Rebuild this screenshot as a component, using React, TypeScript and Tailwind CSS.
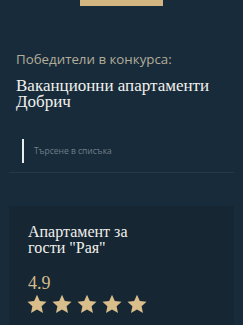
import React from "react";

function Star() {
  return (
    <svg width="20" height="20" viewBox="0 0 24 23" className="block">
      <path
        d="M12 0.5l3.4 7.3 8.1 0.9-6 5.5 1.7 8.1L12 18.2l-7.2 4.1 1.7-8.1-6-5.5 8.1-0.9z"
        fill="#d9bd8a"
      />
    </svg>
  );
}

export default function App() {
  return (
    <div className="w-[243px] h-[325px] bg-[#182b3a] overflow-hidden">
      <div className="mx-auto w-[83px] h-[6px] bg-[#d3b582]" />
      <div className="pt-[43px] px-4">
        <p className="text-[13.3px] leading-[20px] text-[#b3ad9b] font-['Open_Sans',sans-serif]">
          Победители в конкурса:
        </p>
        <h1 className="mt-[9px] text-[17px] leading-[15.5px] text-[#f1f1ee] font-['Liberation_Serif',serif]">
          Ваканционни апартаменти Добрич
        </h1>
      </div>
      <div className="mx-[9px] mt-[30px] border-b border-[#25394a] pb-[9px]">
        <div className="flex items-center h-[24px] pl-[13px]">
          <div className="w-[2px] h-[24px] bg-[#e8eef0]" />
          <span className="ml-[10px] text-[8.5px] text-[#6f7f88] font-['Open_Sans',sans-serif]">
            Търсене в списъка
          </span>
        </div>
      </div>
      <div className="mx-[9px] mt-[33px] bg-[#162632] pt-[18px] px-[18px] pb-[20px]">
        <h2 className="pl-[1px] text-[16px] leading-[16px] text-[#f1f1ee] font-['Liberation_Serif',serif]">
          Апартамент за
          <br />
          гости "Рая"
        </h2>
        <div className="mt-[19px] pl-[1px] text-[18px] leading-[17px] text-[#d4bb8c] font-['Liberation_Serif',serif]">
          4.9
        </div>
        <div className="flex gap-[5px] mt-[2px]">
          <Star />
          <Star />
          <Star />
          <Star />
          <Star />
        </div>
      </div>
    </div>
  );
}
